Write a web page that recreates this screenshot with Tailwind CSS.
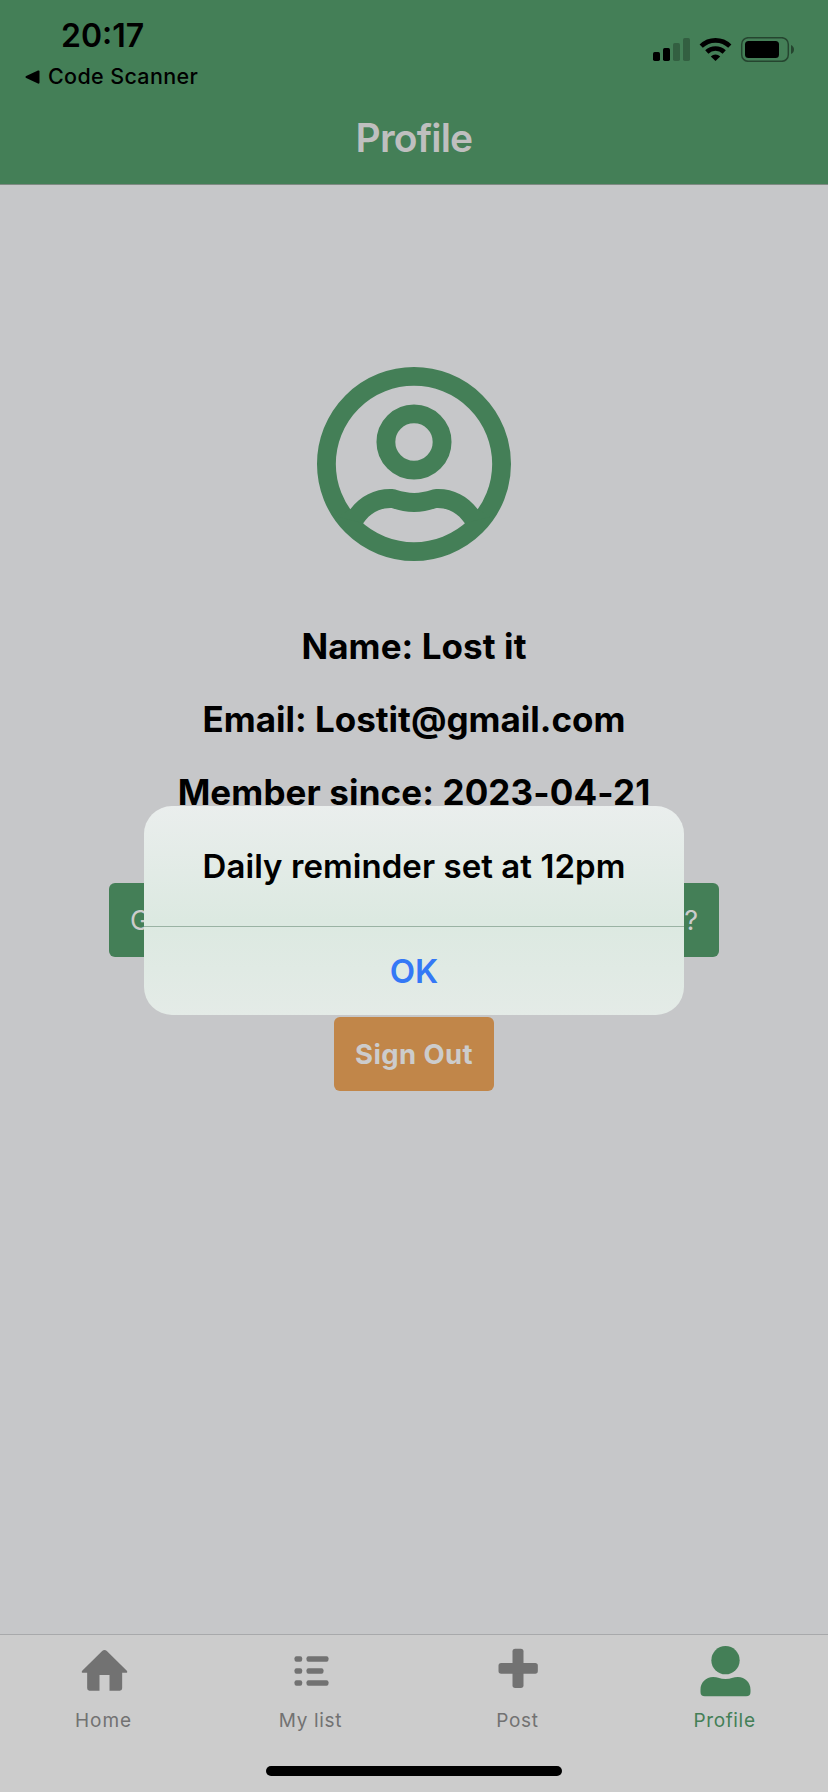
<!DOCTYPE html>
<html lang="en">
<head>
<meta charset="utf-8">
<title>Profile</title>
<script src="https://cdn.jsdelivr.net/npm/@tailwindcss/browser@4"></script>
</head>
<body class="bg-[#c6c7c9] font-['Inter','Liberation_Sans',sans-serif] text-black">
<div class="relative flex h-[1792px] w-[828px] flex-col overflow-hidden">
  <header class="h-[185px] border-b border-[#7f8a83] bg-[#447f57]">
    <div class="flex h-24 justify-between">
      <div class="flex flex-col pt-4">
        <div class="flex h-10 items-center pl-[61px] text-[32px] font-semibold whitespace-nowrap">20:17</div>
        <div class="flex h-10 items-center gap-2 pt-px pl-[25px] text-[21.5px] font-medium tracking-[0.35px] whitespace-nowrap">
          <svg class="h-[14px] w-[15px]" viewBox="0 0 15 14"><path d="M1.200 6 13 .5q1.500-.5 1.500 1v11q0 1.500-1.500 1L1.200 8Q-.3 7 1.200 6Z"/></svg>
          <span>Code Scanner</span>
        </div>
      </div>
      <svg class="mt-[37px] mr-[33px] h-[25px] w-[142px]" viewBox="653 37 142 25">
        <rect x="653" y="52" width="7" height="9" rx="1.700"/>
        <rect x="663" y="48" width="7" height="13" rx="1.700"/>
        <rect x="673" y="43" width="7" height="18" rx="1.700" fill-opacity=".25"/>
        <rect x="683" y="38" width="7" height="23" rx="1.700" fill-opacity=".25"/>
        <g fill="none" stroke="#000" stroke-width="4.600">
          <path d="M701.200 46.200a20.500 20.500 0 0 1 28.600 0"/>
          <path d="M706.800 52a12.500 12.500 0 0 1 17.400 0"/>
        </g>
        <path d="M715.500 61l-4.700-4.600a7 7 0 0 1 9.400 0Z"/>
        <rect x="741.700" y="37.700" width="46.600" height="23.600" rx="6.500" fill="none" stroke="#000" stroke-opacity=".45" stroke-width="1.500"/>
        <rect x="745" y="41" width="34" height="17" rx="3.500"/>
        <path d="M791 45v9q3-1.500 3-4.500t-3-4.500Z" fill-opacity=".45"/>
      </svg>
    </div>
    <h1 class="flex h-[84px] items-center justify-center text-[39px] font-semibold tracking-[-0.8px] text-[#bfbfbf]">Profile</h1>
  </header>

  <main class="flex flex-1 flex-col items-center">
    <svg class="mt-[182px] h-[194px] w-[194px]" viewBox="50.500 51 582 582">
      <g fill="none" stroke="#447f57" stroke-width="56.500">
        <circle cx="341.500" cy="342" r="262.750"/>
        <circle cx="341.500" cy="276" r="84.300"/>
      </g>
      <path fill="#447f57" d="M151 477C180 439 223 417 270 417C279 417 284 418 290 420C307 425 324 429 342 429C360 429 376 425 393 420C400 418 405 417 414 417C461 417 503 439 532 477L570 500L494 520C475 491 445 474 413 474C411 474 408 474 406 475C385 482 364 486 342 486C319 486 298 482 277 475C275 474 273 474 270 474C238 474 208 491 189 520L113 500Z"/>
    </svg>
    <div class="mt-[49px] flex flex-col items-center text-[35px] leading-[73px] font-bold whitespace-nowrap">
      <p class="tracking-[0.08px]">Name: Lost it</p>
      <p>Email: Lostit@gmail.com</p>
      <p class="tracking-[0.12px]">Member since: 2023-04-21</p>
    </div>
    <div class="mt-[54px] flex h-[74px] w-[610px] items-center justify-between rounded-[6px] bg-[#447f57] px-[21px] pt-0.5 text-[27px] text-[#cccccc]"><span>G</span><span>?</span></div>
    <div class="mt-[60px] flex h-[74px] w-[160px] items-center justify-center rounded-[6px] bg-[#c18649] pt-0.5 text-[27.5px] font-bold tracking-[0.4px] whitespace-nowrap text-[#cccccc]">Sign Out</div>
  </main>

  <nav class="flex h-[158px] flex-col items-center border-t border-[#a8a9ab] bg-[#cccccc]">
    <div class="grid h-[131px] w-full grid-cols-4 pt-[5px] text-[19px] leading-[42px] tracking-[0.65px] text-[#727272]">
      <div class="flex flex-col items-center">
        <svg class="h-[60px] w-[60px]" viewBox="220.500 60 180 180" fill="currentColor"><path d="M305 93q7-6 14 0l60 59q4 6-3 6h-11v47q0 7-7 7h-31v-47h-30v47h-30q-7 0-7-7v-47h-12q-7 0-3-6Z"/></svg>
        <span class="tracking-[0.9px]">Home</span>
      </div>
      <div class="flex flex-col items-center">
        <svg class="h-[60px] w-[60px]" viewBox="841.500 60 180 180" fill="currentColor">
          <rect x="882" y="109" width="23" height="16" rx="6"/><rect x="918" y="109" width="66" height="16" rx="6"/>
          <rect x="882" y="145" width="23" height="16" rx="6"/><rect x="918" y="145" width="51" height="16" rx="6"/>
          <rect x="882" y="181" width="23" height="16" rx="6"/><rect x="918" y="181" width="66" height="16" rx="6"/>
        </svg>
        <span>My list</span>
      </div>
      <div class="flex flex-col items-center">
        <svg class="h-[60px] w-[60px]" viewBox="220.500 60 180 180" fill="currentColor"><rect x="294" y="86" width="33" height="118" rx="8"/><rect x="252" y="129" width="118" height="32" rx="8"/></svg>
        <span>Post</span>
      </div>
      <div class="flex flex-col items-center text-[#447f57]">
        <svg class="h-[60px] w-[60px]" viewBox="841.500 60 180 180" fill="currentColor"><circle cx="933" cy="120.500" r="42.500"/><path d="M896 171q10 0 15 2 22 8 44 0 5-2 15-2c22 0 38 17 38 38v7q0 13-13 13H871q-13 0-13-13v-7c0-21 16-38 38-38Z"/></svg>
        <span>Profile</span>
      </div>
    </div>
    <div class="h-[10px] w-[296px] rounded-full bg-black"></div>
  </nav>

  <div role="alertdialog" class="absolute top-[806px] left-[144px] flex h-[209px] w-[540px] flex-col overflow-hidden rounded-[28px] bg-linear-to-b from-[#eaeeed] via-[#dce9e1] via-55% to-[#e4ebe7] whitespace-nowrap">
    <div class="flex h-[121px] items-center justify-center border-b border-[#9ab3a4] pt-0.5 text-[33px] font-semibold tracking-[0.06px]">Daily reminder set at 12pm</div>
    <div class="flex h-[88px] items-center justify-center pt-0.5 text-[33px] font-semibold text-[#3478f6]">OK</div>
  </div>
</div>
</body>
</html>
